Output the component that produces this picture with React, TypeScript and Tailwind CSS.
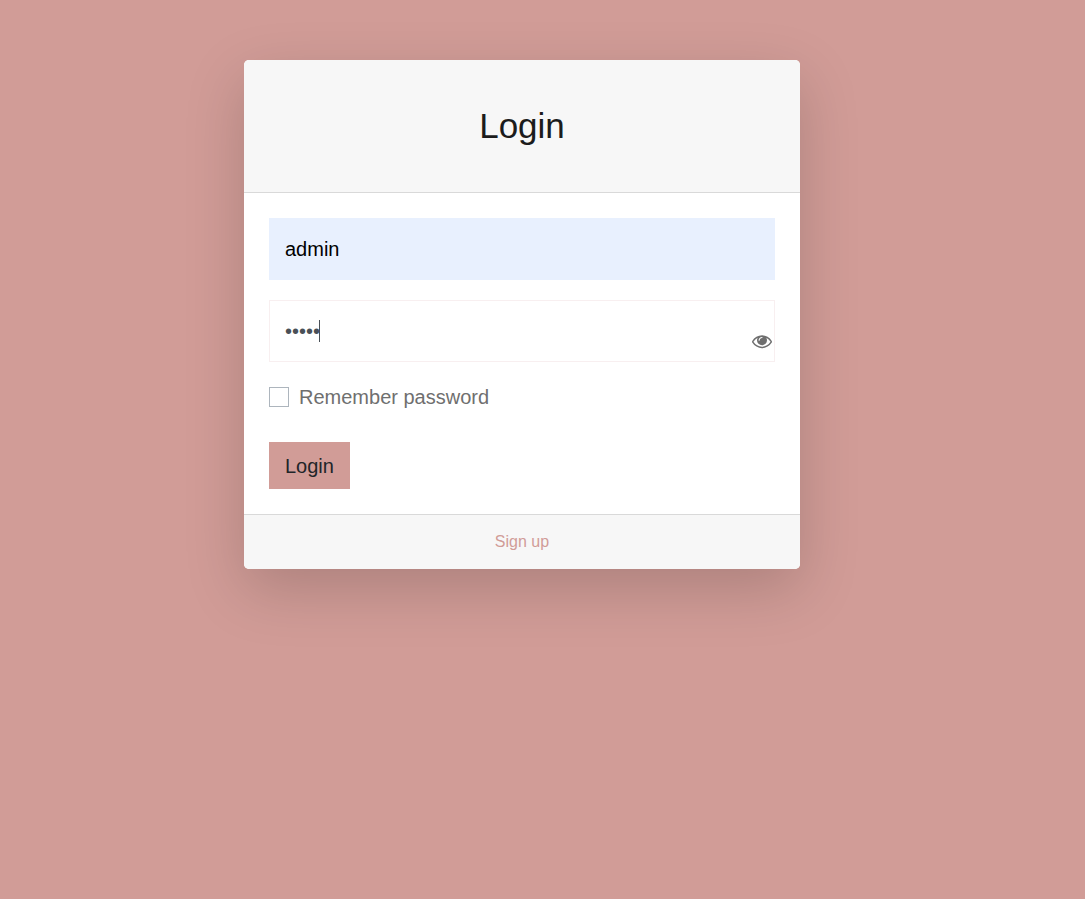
import { useState } from "react";

function EyeIcon() {
  return (
    <svg viewBox="0 0 1792 1792" className="size-5 fill-current" aria-hidden="true">
      <path d="M1664 960q-152-236-381-353 61 104 61 225 0 185-131.5 316.5t-316.5 131.5-316.5-131.5-131.5-316.5q0-121 61-225-229 117-381 353 133 205 333.5 326.5t434.5 121.5 434.5-121.5 333.5-326.5zm-720-384q0-20-14-34t-34-14q-125 0-214.5 89.5t-89.5 214.5q0 20 14 34t34 14 34-14 14-34q0-86 61-147t147-61q20 0 34-14t14-34zm848 384q0 34-20 69-140 230-376.5 368.5t-499.5 138.5-499.5-139-376.5-368q-20-35-20-69t20-69q140-229 376.5-368t499.5-139 499.5 139 376.5 368q20 35 20 69z" />
    </svg>
  );
}

export default function App() {
  const [user, setUser] = useState("admin");
  const [password, setPassword] = useState("admin");
  const [visible, setVisible] = useState(false);
  const [remember, setRemember] = useState(false);

  return (
    <div className="flex min-h-screen items-start justify-center bg-[#d19c97] pt-15 pr-[41px] pb-15 font-['Liberation_Sans',Arial,sans-serif] text-xl leading-[30px] text-[#6f6f6f]">
      <main className="w-full max-w-[556px] overflow-hidden rounded-[5px] bg-white shadow-[0_20px_60px_rgba(0,0,0,0.175)]">
        <header className="border-b border-[#d9d9d9] bg-[#f7f7f7] py-[45px] text-center">
          <h1 className="text-[35px] leading-[42px] text-[#1c1c1c]">Login</h1>
        </header>

        <form className="flex flex-col p-[25px]" onSubmit={(e) => e.preventDefault()}>
          <input
            type="text"
            aria-label="Username"
            value={user}
            onChange={(e) => setUser(e.target.value)}
            className="h-[62px] w-full bg-[#e8f0fe] px-4 text-black outline-none"
          />

          <div className="relative mt-5">
            <input
              type={visible ? "text" : "password"}
              aria-label="Password"
              value={password}
              onChange={(e) => setPassword(e.target.value)}
              className="block h-[62px] w-full border border-[#f8eff0] px-[15px] text-[#495057] caret-transparent outline-none"
            />
            {!visible && (
              <span
                className="pointer-events-none absolute top-5 left-[15px] h-[22px] border-r border-[#495057]"
                style={{ width: password.length * 7 + 1 }}
              />
            )}
            <button
              type="button"
              aria-label="Show password"
              onClick={() => setVisible(!visible)}
              className="absolute right-[3px] bottom-[11px]"
            >
              <EyeIcon />
            </button>
          </div>

          <label className="mt-5 flex items-center gap-2.5 self-start">
            <input
              type="checkbox"
              checked={remember}
              onChange={(e) => setRemember(e.target.checked)}
              className="size-5 appearance-none border border-[#adb5bd] bg-white checked:bg-[#d19c97]"
            />
            Remember password
          </label>

          <button type="submit" className="mt-[30px] h-[47px] self-start bg-[#d19c97] px-4 text-[#212529]">
            Login
          </button>
        </form>

        <footer className="border-t border-[#d9d9d9] bg-[#f7f7f7] py-[15px] text-center text-base leading-6">
          <a href="#signup" className="text-[#d19c97]">
            Sign up
          </a>
        </footer>
      </main>
    </div>
  );
}
